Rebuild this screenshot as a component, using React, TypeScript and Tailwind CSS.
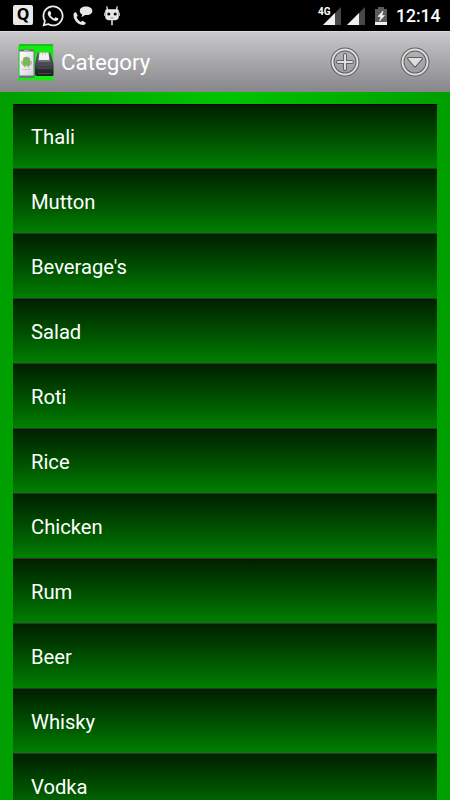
import { FaWhatsapp } from 'react-icons/fa';

const categories = [
  'Thali',
  'Mutton',
  "Beverage's",
  'Salad',
  'Roti',
  'Rice',
  'Chicken',
  'Rum',
  'Beer',
  'Whisky',
  'Vodka',
];

function CallBubbleIcon() {
  return (
    <svg width="22" height="22" viewBox="0 0 22 22" fill="#e8e8e8">
      <path d="M2.200 7.300C1.100 7.700.500 8.700.500 10c0 5.200 4.600 10 9.700 10 1.300 0 2.200-.7 2.500-1.700.1-.4 0-.7-.3-.9l-2.500-1.500c-.4-.2-.7-.1-.9.2l-1 1c-1.900-.9-3.800-3-4.500-5.100l.9-.8c.3-.2.3-.6.2-.9L3.200 7.600c-.2-.3-.6-.4-1-.3z" />
      <path d="M13 1.600c-3.700 0-6.200 1.800-6.200 4.300 0 1.500.8 2.800 2.300 3.500 0 1.100-.3 1.900-.7 2.700 1.500-.3 2.700-1 3.600-2h1c3.700 0 6.300-1.700 6.300-4.200S16.700 1.600 13 1.600z" />
    </svg>
  );
}

function CidIcon() {
  return (
    <svg width="18" height="22" viewBox="0 0 18 22">
      <path d="M3.700 1.300l1 4M14.300 1.300l-1 4" stroke="#e8e8e8" strokeWidth="1.300" />
      <path d="M4 4.300h10c1 0 1.800.6 1.800 1.500v6c0 2.200-1.600 3.400-3.500 3.400H5.700c-1.900 0-3.500-1.200-3.500-3.400v-6c0-.9.800-1.500 1.800-1.500z" fill="#e8e8e8" />
      <path d="M1.500 7.500v3.500M16.500 7.500v3.500" stroke="#aaa" strokeWidth="1" />
      <circle cx="5.800" cy="9" r="1.600" fill="#111" />
      <circle cx="12.200" cy="9" r="1.600" fill="#111" />
      <path d="M7.500 13h3" stroke="#777" strokeWidth=".8" />
      <path d="M9 15v5.300" stroke="#e8e8e8" strokeWidth="1.500" />
    </svg>
  );
}

function SignalIcon() {
  return (
    <svg width="18" height="18" viewBox="0 0 18 18">
      <path d="M0 18L18 0v18z" fill="#484848" />
      <path d="M0 18L12 6v12z" fill="#f0f0f0" />
    </svg>
  );
}

function BatteryIcon() {
  return (
    <svg width="12" height="18" viewBox="0 0 12 18">
      <path d="M3 0h6v2h3v16H0V2h3z" fill="#5c5c5c" />
      <path d="M0 15h12v3H0z" fill="#f0f0f0" />
      <path d="M8 4L3 9.500h3L4.500 14l5-5.500H6.800z" fill="#f0f0f0" stroke="#f0f0f0" strokeWidth=".7" />
    </svg>
  );
}

function StatusBar() {
  return (
    <div className="flex h-[31px] shrink-0 items-start bg-black">
      <div className="mt-[5px] ml-[13px] flex h-5 w-5 justify-center rounded-[2px] bg-[#e8e8e8] font-['Noto_Sans'] text-[16px] leading-[18px] font-bold text-black">
        Q
      </div>
      <FaWhatsapp className="mt-[3.500px] ml-[8px] size-6 text-[#ededed]" />
      <div className="mt-[5px] ml-[8px]">
        <CallBubbleIcon />
      </div>
      <div className="mt-[5px] ml-[8px]">
        <CidIcon />
      </div>
      <div className="relative mt-[7px] ml-auto">
        <span className="absolute -top-px -left-[5px] text-[10px] leading-[11px] font-bold text-white [text-shadow:0_0_1px_#000,1px_1px_0_#000]">4G</span>
        <SignalIcon />
      </div>
      <div className="mt-[7px] ml-[6px]">
        <SignalIcon />
      </div>
      <div className="mt-[6.500px] ml-[10px]">
        <BatteryIcon />
      </div>
      <span className="mt-[5px] mr-[9px] ml-[9px] w-[45px] text-[17.500px] leading-[23px] font-medium whitespace-nowrap text-white">12:14</span>
    </div>
  );
}

function AppLogo() {
  return (
    <svg width="36" height="37" viewBox="0 0 36 37">
      <defs>
        <linearGradient id="phone" x2="1" y2="1">
          <stop stopColor="#fff" />
          <stop offset="1" stopColor="#d4d4dc" />
        </linearGradient>
        <linearGradient id="printer" x2="0" y2="1">
          <stop stopColor="#65656b" />
          <stop offset=".5" stopColor="#3a3a40" />
          <stop offset="1" stopColor="#1c1c20" />
        </linearGradient>
      </defs>
      <rect x=".3" y=".5" width="35" height="36" rx="1.500" fill="#11ed11" />
      <path d="M1 1h34" stroke="#18af18" strokeWidth="1.500" />
      <rect x="1" y="5.500" width="15.500" height="28.500" rx="1.500" fill="#71717c" />
      <rect x="1.500" y="7.500" width="14" height="24" fill="url(#phone)" />
      <path d="M6 6.500h5" stroke="#ccc" strokeWidth=".7" />
      <path d="M4.800 16.500a3.700 3.700 0 0 1 7.400 0zM4.800 16.500h7.400v5.200H4.800z" fill="#80b45c" />
      <path d="M4 17v3.500M13 17v3.500M6.900 21v2.200M10.100 21v2.200" stroke="#80b45c" strokeWidth="1.200" />
      <path d="M4 25.500h9" stroke="#aaa" strokeWidth=".8" strokeDasharray="1 .5" />
      <path d="M17.500 18l2-9.500h13l2.500 9.500.5 3v10q0 1-2 1H19q-2 0-2-2V21z" fill="url(#printer)" />
      <path d="M21.500 8.500h9l1 8H20.500z" fill="#f1f1f4" />
      <path d="M24.500 8.500v2.500M27.500 8.500v2.500" stroke="#bbb" strokeWidth=".8" />
      <path d="M17.500 20.500l2-4.500h13l2.500 4.500-.5 2H17.500z" fill="#4a4a51" />
      <path d="M20 17h12.500" stroke="#9a9aa0" />
      <path d="M18.500 24h16" stroke="#606067" strokeWidth=".8" />
      <path d="M20 29.500h13" stroke="#47474d" />
    </svg>
  );
}

function AddIcon() {
  return (
    <svg width="30" height="30" viewBox="0 0 30 30" fill="none">
      <circle cx="15" cy="15" r="12.500" stroke="#616164" strokeWidth="4" />
      <circle cx="15" cy="15" r="12.500" stroke="#dededf" strokeWidth="2" />
      <path d="M15 8v14M8 15h14" stroke="#616164" strokeWidth="4" strokeLinecap="round" />
      <path d="M15 8v14M8 15h14" stroke="#dededf" strokeWidth="2" strokeLinecap="round" />
    </svg>
  );
}

function MenuIcon() {
  return (
    <svg width="30" height="30" viewBox="0 0 30 30" fill="none">
      <circle cx="15" cy="15" r="12.500" stroke="#616164" strokeWidth="4" />
      <circle cx="15" cy="15" r="12.500" stroke="#dededf" strokeWidth="2" />
      <path d="M8.500 11.500h13L15 19z" fill="#dededf" stroke="#616164" strokeWidth="3" strokeLinejoin="round" />
      <path d="M8.500 11.500h13L15 19z" fill="#dededf" stroke="#dededf" strokeWidth="1" strokeLinejoin="round" />
    </svg>
  );
}

function ActionBar() {
  return (
    <header className="flex h-[61px] shrink-0 items-center border-t border-[#dadadb] bg-linear-to-b from-[#c9c9cb] to-[#87878b] pr-5 pl-[18px]">
      <AppLogo />
      <h1 className="ml-[7px] text-[22.300px] leading-7 font-normal text-white">Category</h1>
      <button className="ml-auto">
        <AddIcon />
      </button>
      <button className="ml-10">
        <MenuIcon />
      </button>
    </header>
  );
}

export default function App() {
  return (
    <div className="flex h-[800px] w-[450px] flex-col overflow-hidden font-[Roboto,sans-serif]">
      <StatusBar />
      <ActionBar />
      <main className="min-h-0 flex-1 overflow-hidden bg-linear-to-r from-[#009e00] via-[#00c400] to-[#009e00] px-[13px] pt-3">
        <ul className="w-[424px]">
          {categories.map((name) => (
            <li
              key={name}
              className="flex h-[65px] items-center border-b border-[#303430] bg-linear-to-b from-[#002000] to-[#008000] pt-[2px] pl-[18px] text-[20.200px] text-white first:border-t first:border-t-black first:pt-px"
            >
              {name}
            </li>
          ))}
        </ul>
      </main>
    </div>
  );
}
